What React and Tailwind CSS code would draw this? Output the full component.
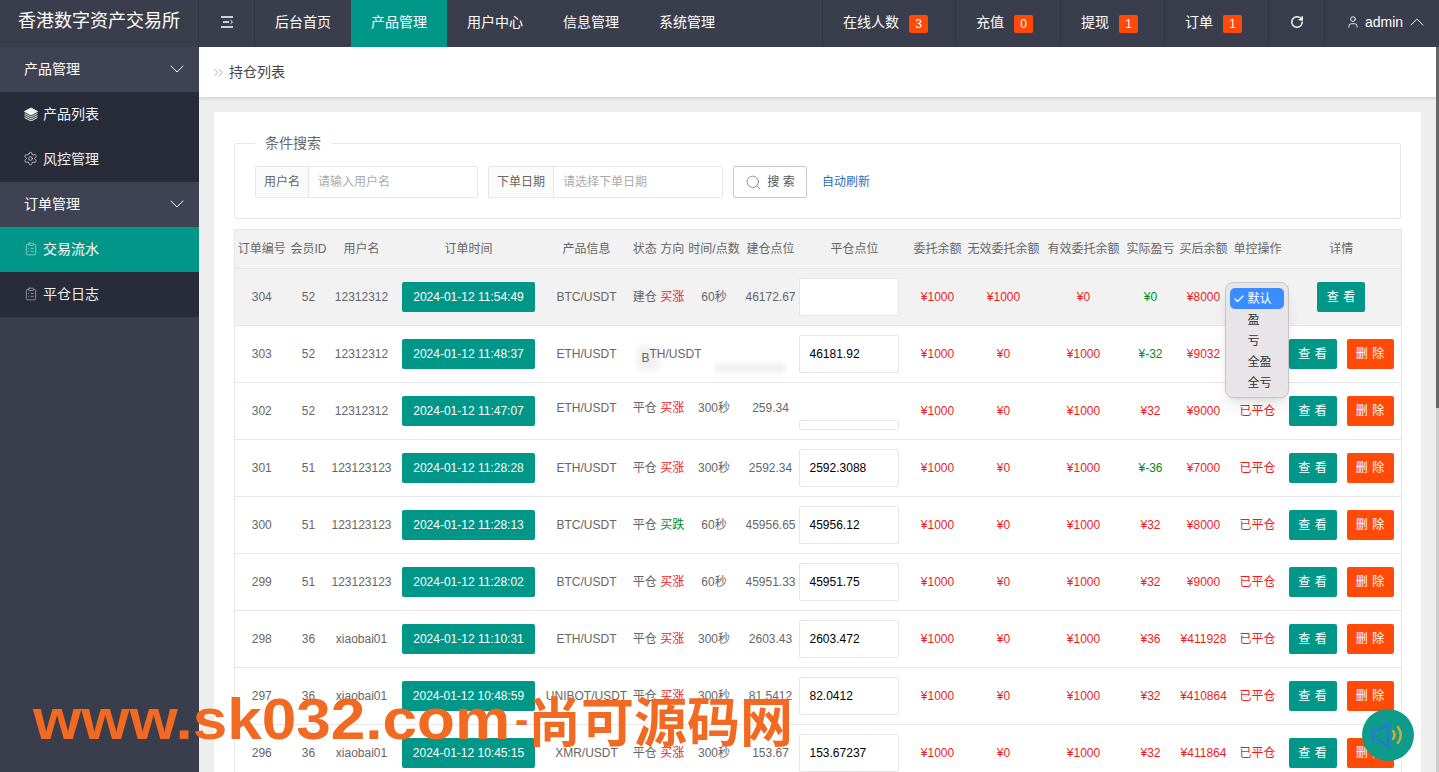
import { ChevronDown, ChevronUp, ChevronsRight, ClipboardList, RotateCw, Search, Settings, User, Check } from 'lucide-react'

const NAV = ['后台首页', '产品管理', '用户中心', '信息管理', '系统管理']

const STATS = [
  { label: '在线人数', count: 3, width: 'w-[133px]' },
  { label: '充值', count: 0, width: 'w-[105px]' },
  { label: '提现', count: 1, width: 'w-[104px]' },
  { label: '订单', count: 1, width: 'w-[104px]' },
]

const COLS = [
  { title: '订单编号', width: 54 },
  { title: '会员ID', width: 40 },
  { title: '用户名', width: 66 },
  { title: '订单时间', width: 148 },
  { title: '产品信息', width: 88 },
  { title: '状态 方向', width: 56 },
  { title: '时间/点数', width: 55 },
  { title: '建仓点位', width: 58 },
  { title: '平仓点位', width: 100, pad: 'pl-[10px]' },
  { title: '委托余额', width: 76 },
  { title: '无效委托余额', width: 56 },
  { title: '有效委托余额', width: 104 },
  { title: '实际盈亏', width: 30 },
  { title: '买后余额', width: 76 },
  { title: '单控操作', width: 32 },
  { title: '详情', width: 128, pad: 'pl-2' },
]

const ROWS = [
  { id: 304, uid: 52, name: '12312312', time: '2024-01-12 11:54:49', pair: 'BTC/USDT', state: '建仓', dir: '买涨', dur: '60秒', open: '46172.67', close: '', invalid: '¥1000', valid: '¥0', profit: '¥0', win: false, after: '¥8000' },
  { id: 303, uid: 52, name: '12312312', time: '2024-01-12 11:48:37', pair: 'ETH/USDT', glitch: true, close: '46181.92', invalid: '¥0', valid: '¥1000', profit: '¥-32', win: false, after: '¥9032' },
  { id: 302, uid: 52, name: '12312312', time: '2024-01-12 11:47:07', pair: 'ETH/USDT', state: '平仓', dir: '买涨', dur: '300秒', open: '259.34', lift: true, wiped: true, invalid: '¥0', valid: '¥1000', profit: '¥32', win: true, after: '¥9000' },
  { id: 301, uid: 51, name: '123123123', time: '2024-01-12 11:28:28', pair: 'ETH/USDT', state: '平仓', dir: '买涨', dur: '300秒', open: '2592.34', close: '2592.3088', invalid: '¥0', valid: '¥1000', profit: '¥-36', win: false, after: '¥7000' },
  { id: 300, uid: 51, name: '123123123', time: '2024-01-12 11:28:13', pair: 'BTC/USDT', state: '平仓', dir: '买跌', dur: '60秒', open: '45956.65', close: '45956.12', invalid: '¥0', valid: '¥1000', profit: '¥32', win: true, after: '¥8000' },
  { id: 299, uid: 51, name: '123123123', time: '2024-01-12 11:28:02', pair: 'BTC/USDT', state: '平仓', dir: '买涨', dur: '60秒', open: '45951.33', close: '45951.75', invalid: '¥0', valid: '¥1000', profit: '¥32', win: true, after: '¥9000' },
  { id: 298, uid: 36, name: 'xiaobai01', time: '2024-01-12 11:10:31', pair: 'ETH/USDT', state: '平仓', dir: '买涨', dur: '300秒', open: '2603.43', close: '2603.472', invalid: '¥0', valid: '¥1000', profit: '¥36', win: true, after: '¥411928' },
  { id: 297, uid: 36, name: 'xiaobai01', time: '2024-01-12 10:48:59', pair: 'UNIBOT/USDT', state: '平仓', dir: '买涨', dur: '300秒', open: '81.5412', close: '82.0412', invalid: '¥0', valid: '¥1000', profit: '¥32', win: true, after: '¥410864' },
  { id: 296, uid: 36, name: 'xiaobai01', time: '2024-01-12 10:45:15', pair: 'XMR/USDT', state: '平仓', dir: '买涨', dur: '300秒', open: '153.67', close: '153.67237', invalid: '¥0', valid: '¥1000', profit: '¥32', win: true, after: '¥411864' },
]

function MenuIcon() {
  return (
    <svg width="14" height="12" viewBox="0 0 14 12" fill="none" stroke="currentColor" strokeWidth="1.3">
      <path d="M1 1h12M1 11h12M3 6h6" />
      <path d="M10.5 4.2 12.5 6l-2 1.8" strokeWidth="1" />
    </svg>
  )
}

function LayersIcon() {
  return (
    <svg width="14" height="14" viewBox="0 0 14 14" fill="none" stroke="currentColor" strokeWidth="1">
      <path d="M7 1 13.5 4.5 7 8 .5 4.5Z" fill="currentColor" />
      <path d="M.5 6.5 7 10l6.500-3.500M.5 8.500 7 12l6.500-3.500M.5 10.500 7 14l6.500-3.500" />
    </svg>
  )
}

function SpeakerIcon() {
  return (
    <svg width="34" height="30" viewBox="0 0 34 30" fill="none" strokeLinecap="round">
      <path d="M2 10h6l9-7v24l-9-7H2Z" stroke="#2f6fe8" strokeWidth="2" strokeLinejoin="round" />
      <path d="M22 11c2 2.500 2 5.500 0 8" stroke="#d6a928" strokeWidth="2.500" />
      <path d="M27 7c3.500 5 3.500 11 0 16" stroke="#d6a928" strokeWidth="2.500" />
    </svg>
  )
}

function Header() {
  return (
    <header className="flex h-[47px] shrink-0 bg-[#3a3d4b] text-sm text-white">
      <div className="flex w-[199px] items-center justify-center border-r border-[#32353f] pb-[4px] text-[18px]">香港数字资产交易所</div>
      <div className="flex w-[56px] items-center justify-center border-r border-[#32353f] pb-[4px]">
        <MenuIcon />
      </div>
      {NAV.map((item) => (
        <div key={item} className={`flex w-[96px] items-center justify-center pb-[4px] ${item === '产品管理' ? 'bg-[#009688]' : ''}`}>
          {item}
        </div>
      ))}
      <div className="ml-auto flex">
        {STATS.map((s) => (
          <div key={s.label} className={`flex items-center gap-[10px] border-l border-[#32353f] pl-[20px] ${s.width}`}>
            <span className="mb-[4px]">{s.label}</span>
            <span className="flex h-[18px] w-[19px] items-center justify-center rounded-[2px] bg-[#ff4a08] text-xs">{s.count}</span>
          </div>
        ))}
        <div className="flex w-[56px] items-center justify-center border-l border-[#32353f] pb-[4px]">
          <RotateCw size={14} strokeWidth={2.500} />
        </div>
        <div className="flex w-[115px] items-center border-l border-[#32353f] pb-[4px] pl-[21px]">
          <User size={14} strokeWidth={1.500} />
          <span className="ml-[5px]">admin</span>
          <ChevronUp size={24} strokeWidth={1} className="ml-[2px]" />
        </div>
      </div>
    </header>
  )
}

function Sidebar() {
  const group = 'flex h-[45px] items-center justify-between bg-[#3f4252] pb-[2px] pl-6 pr-[10px]'
  const sub = 'flex h-[45px] items-center gap-[5px] bg-[#282b38] pb-[2px] pl-6 text-[#f0f0f0]'
  return (
    <aside className="w-[199px] shrink-0 bg-[#3a3d4b] text-sm text-white">
      <div className={group}>
        产品管理
        <ChevronDown size={24} strokeWidth={1} />
      </div>
      <div className={sub}>
        <LayersIcon />
        产品列表
      </div>
      <div className={sub}>
        <Settings size={15} strokeWidth={1.100} className="-ml-px" />
        风控管理
      </div>
      <div className={group}>
        订单管理
        <ChevronDown size={24} strokeWidth={1} />
      </div>
      <div className="flex h-[45px] items-center gap-[5px] bg-[#009688] pb-[2px] pl-6">
        <ClipboardList size={14} strokeWidth={1.200} className="opacity-70" />
        交易流水
      </div>
      <div className={sub}>
        <ClipboardList size={14} strokeWidth={1.200} className="opacity-70" />
        平仓日志
      </div>
    </aside>
  )
}

function SearchForm() {
  return (
    <fieldset className="h-[86px] rounded-[2px] border border-[#e6e6e6] px-5">
      <legend className="px-[10px] text-sm leading-[20px] text-[#666]">条件搜索</legend>
      <div className="mt-[13px] flex items-center text-xs">
        <div className="flex h-[32px] w-[223px] rounded-[2px] border border-[#e6e6e6]">
          <span className="flex w-[53px] items-center justify-center border-r border-[#e6e6e6] bg-[#fbfbfb] text-[#666]">用户名</span>
          <span className="flex items-center pl-[9px] text-[#aaa]">请输入用户名</span>
        </div>
        <div className="ml-[10px] flex h-[32px] w-[235px] rounded-[2px] border border-[#e6e6e6]">
          <span className="flex w-[65px] items-center justify-center border-r border-[#e6e6e6] bg-[#fbfbfb] text-[#666]">下单日期</span>
          <span className="flex items-center pl-[9px] text-[#aaa]">请选择下单日期</span>
        </div>
        <button className="ml-[10px] flex h-[32px] w-[74px] items-center justify-center gap-[5px] rounded-[2px] border border-[#c9c9c9] text-[#555]">
          <Search size={17} strokeWidth={0.900} />
          搜 索
        </button>
        <span className="ml-[15px] text-[#1e6fbe]">自动刷新</span>
      </div>
    </fieldset>
  )
}

function PriceInput({ value }) {
  return (
    <div className="-ml-px flex h-[38px] w-[100px] items-center rounded-[2px] border border-[#e6e6e6] bg-white pl-[10px] text-black">
      {value}
    </div>
  )
}

// 幅の狭い列でも文字が左右均等にはみ出すように flex で中央寄せ
function Cell({ className = '', children }) {
  return (
    <td className={`p-0 whitespace-nowrap ${className}`}>
      <div className="flex justify-center">{children}</div>
    </td>
  )
}

function Row({ row, index }) {
  const lifted = row.lift ? 'pb-[6px]' : ''
  const red = 'text-[#f01c1c]'
  return (
    <tr className={`h-[57px] border-t border-[#e6e6e6] ${index === 0 ? 'bg-[#f2f2f2]' : 'bg-white'}`}>
      <Cell>{row.id}</Cell>
      <Cell>{row.uid}</Cell>
      <Cell>{row.name}</Cell>
      <td className="p-0">
        <span className="mx-auto flex h-[30px] w-[133px] items-center justify-center rounded-[2px] bg-[#009688] font-medium whitespace-nowrap text-white">{row.time}</span>
      </td>
      <Cell className={lifted}>{row.pair}</Cell>
      {row.glitch ? (
        <td className="relative p-0 whitespace-nowrap">
          <span className="absolute left-[6px] top-[20px] h-[24px] w-[22px] bg-[#f1f1f1] blur-[3px]" />
          <span className="relative flex pl-[11px]">
            <span className="translate-y-[4px]">B</span>
            <span>TH/USDT</span>
          </span>
        </td>
      ) : (
        <Cell className={lifted}>
          <span>
            {row.state} <span className={row.dir === '买跌' ? 'text-[#008a1e]' : red}>{row.dir}</span>
          </span>
        </Cell>
      )}
      <Cell className={lifted}>{row.dur}</Cell>
      {row.glitch ? (
        <td className="relative p-0">
          <span className="absolute left-[-27px] top-[37px] h-[10px] w-[70px] bg-[#f0f0f0] blur-[2px]" />
        </td>
      ) : (
        <Cell className={lifted}>{row.open}</Cell>
      )}
      <td className="p-0">
        {row.wiped ? (
          <div className="-ml-px flex h-[38px] items-end">
            <span className="h-[10px] w-[100px] rounded-[2px] border border-[#e6e6e6]" />
          </div>
        ) : (
          <PriceInput value={row.close} />
        )}
      </td>
      <Cell className={red}>¥1000</Cell>
      <Cell className={red}>{row.invalid}</Cell>
      <Cell className={red}>{row.valid}</Cell>
      <Cell className={row.win ? red : 'text-[#008a1e]'}>{row.profit}</Cell>
      <Cell className={red}>{row.after}</Cell>
      {index === 0 ? (
        <td className="relative p-0">
          <Dropdown />
        </td>
      ) : (
        <Cell className={red}>已平仓</Cell>
      )}
      <td className="p-0 pl-2">
        <div className="flex justify-center gap-[10px]">
          <button className="h-[30px] w-[48px] rounded-[2px] bg-[#009688] tracking-[0.5px] text-white">查 看</button>
          {index > 0 && <button className="h-[30px] w-[47px] rounded-[2px] bg-[#ff4a08] tracking-[0.5px] text-white">删 除</button>}
        </div>
      </td>
    </tr>
  )
}

function Dropdown() {
  return (
    <div className="absolute left-[-17px] top-[13px] z-10 h-[116px] w-[64px] rounded-lg border border-[#c8c4c6] bg-[#e9e4e7] px-[4px] pt-[5px] text-xs text-[#333] shadow-lg">
      <div className="flex h-[21px] items-center rounded-[5px] bg-[#3b8cff] text-white">
        <Check size={12} strokeWidth={2.500} className="ml-[3px]" />
        <span className="ml-[3px]">默认</span>
      </div>
      {['盈', '亏', '全盈', '全亏'].map((opt) => (
        <div key={opt} className="flex h-[21px] items-center pl-[18px]">
          {opt}
        </div>
      ))}
    </div>
  )
}

function OrderTable() {
  return (
    <table className="mt-[10px] w-[1167px] table-fixed border-collapse border border-[#e6e6e6] text-xs text-[#666]">
      <colgroup>
        {COLS.map((c) => (
          <col key={c.title} style={{ width: c.width }} />
        ))}
      </colgroup>
      <thead>
        <tr className="h-[39px] bg-[#f2f2f2]">
          {COLS.map((c) => (
            <th key={c.title} className={`p-0 font-normal whitespace-nowrap ${c.pad || ''}`}>
              <div className="flex justify-center">{c.title}</div>
            </th>
          ))}
        </tr>
      </thead>
      <tbody>
        {ROWS.map((row, i) => (
          <Row key={row.id} row={row} index={i} />
        ))}
      </tbody>
    </table>
  )
}

export default function App() {
  return (
    <div className="relative flex h-screen flex-col overflow-hidden font-['Liberation_Sans','Noto_Sans_CJK_SC',sans-serif]">
      <Header />
      <div className="flex min-h-0 flex-1">
        <Sidebar />
        <main className="min-w-0 flex-1 overflow-hidden bg-[#eeeeee]">
          <div className="flex h-[50px] items-center gap-[3px] bg-white pl-[12px] text-sm text-[#444] shadow-[0_1px_4px_rgba(0,0,0,0.15)]">
            <ChevronsRight size={15} strokeWidth={1} className="text-[#777]" />
            持仓列表
          </div>
          <div className="mx-[15px] mt-[15px] bg-white px-5 pt-[21px] pb-5">
            <SearchForm />
            <OrderTable />
          </div>
        </main>
        <div className="flex w-[3px] shrink-0 flex-col bg-[#cccccc]">
          <div className="h-[361px] bg-[#666666]" />
        </div>
      </div>

      <div className="pointer-events-none absolute left-[33px] top-[690px] z-20 flex items-center font-bold leading-none text-[#f26a21]">
        <span className="w-[482px] origin-left scale-x-[1.07] whitespace-nowrap text-[58px]">www.sk032.com</span>
        <span className="w-[13px] text-[40px]">-</span>
        <span className="text-[53px] font-['Noto_Sans_CJK_SC',sans-serif]">尚可源码网</span>
      </div>

      <div className="absolute left-[1362px] top-[709px] z-20 flex h-[52px] w-[52px] items-center justify-center rounded-full bg-[#0d9c8c]">
        <SpeakerIcon />
      </div>
    </div>
  )
}
